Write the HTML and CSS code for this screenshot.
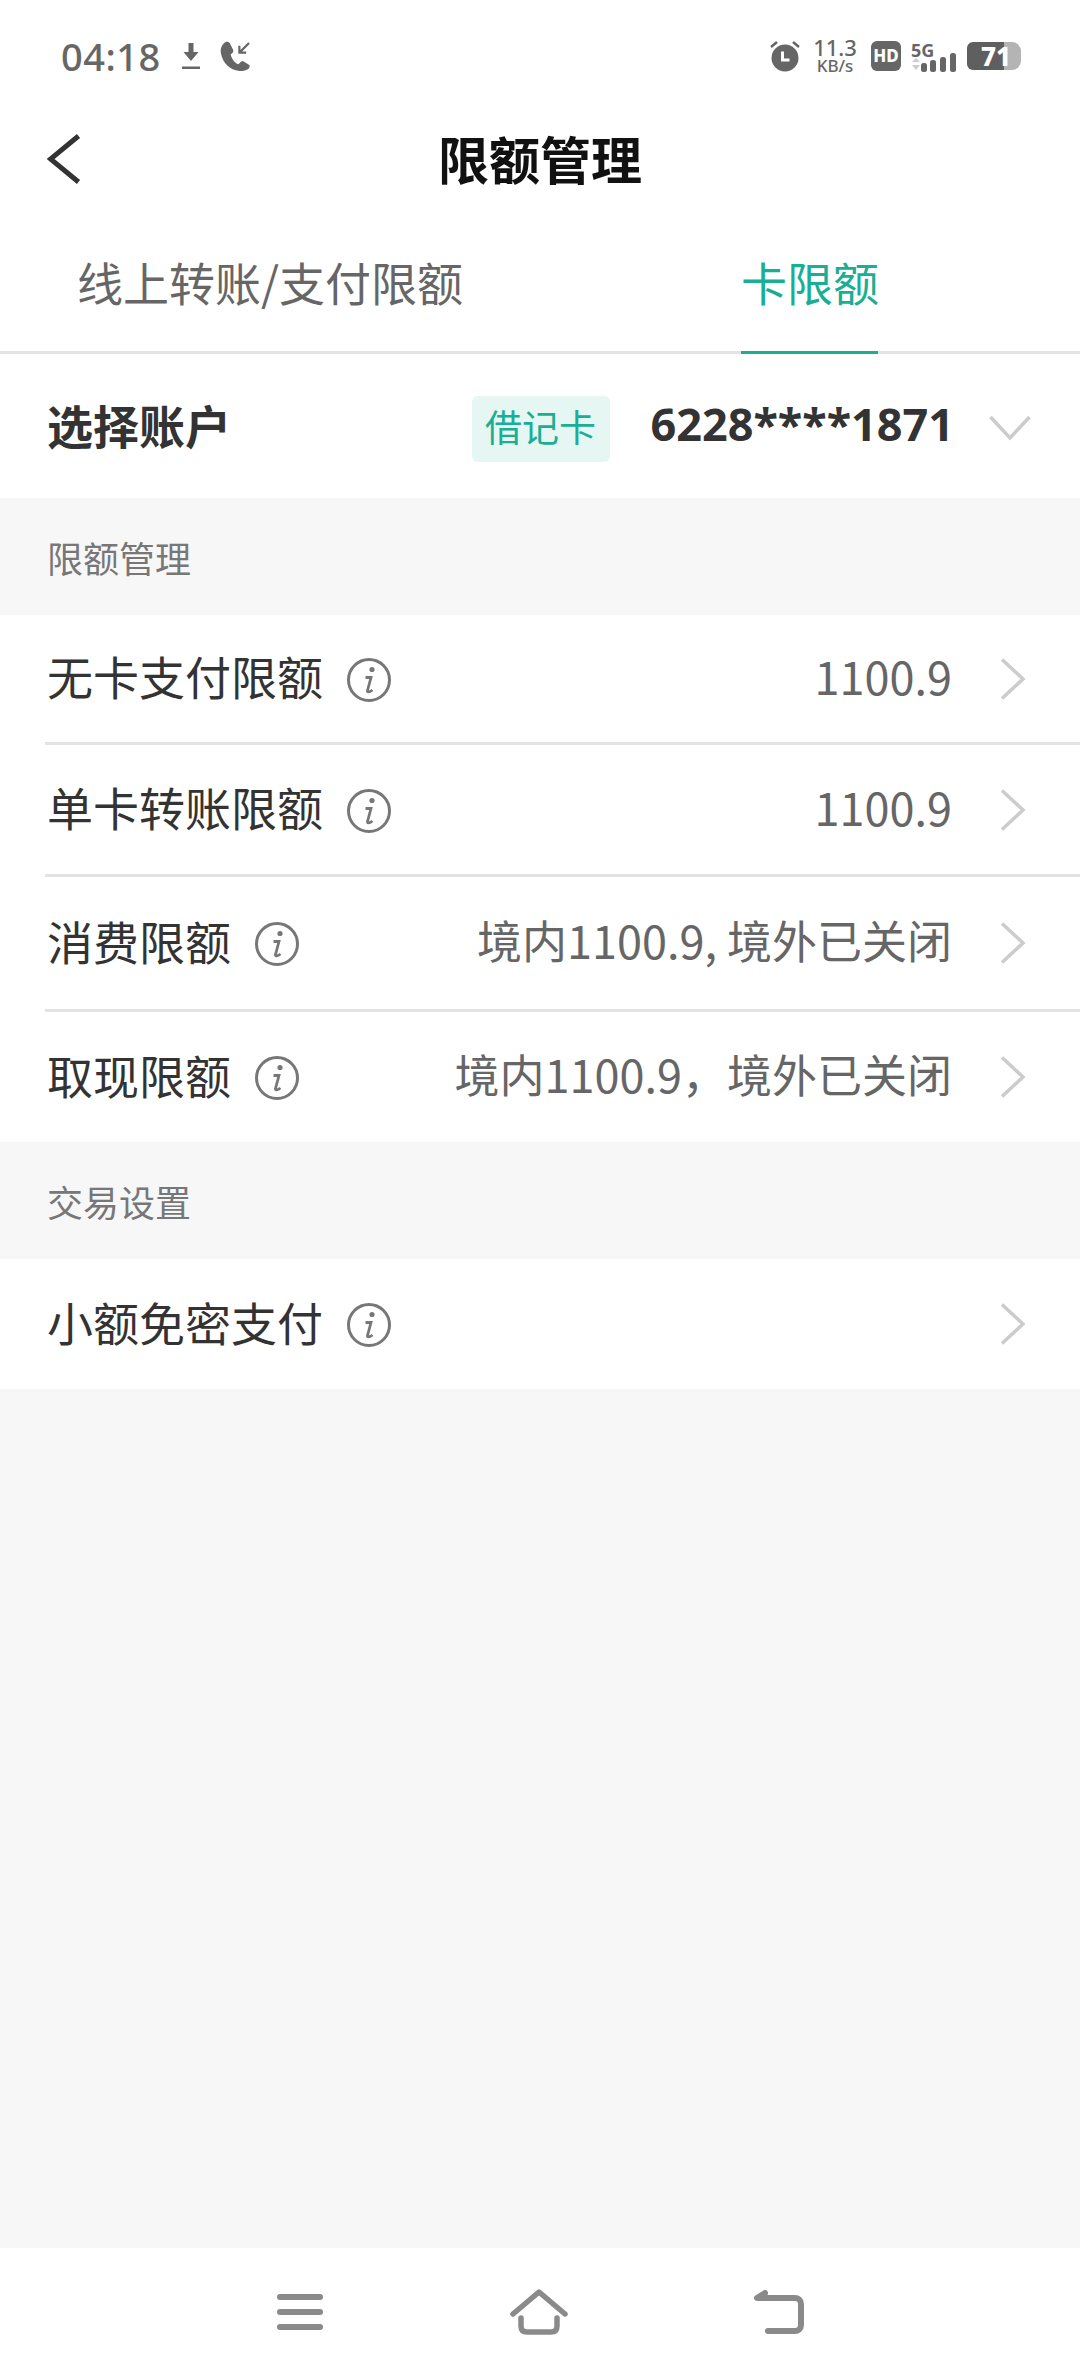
FILE: index.html
```html
<!DOCTYPE html>
<html lang="zh-CN">
<head>
<meta charset="utf-8">
<title>限额管理</title>
<link rel="stylesheet" href="styles.css">
</head>
<body>
<div class="page">
  <div class="status">
    <div class="status-left">
      <span class="time">04:18</span>
      <svg class="i-dl" width="18" height="26" viewBox="0 0 18 26"><path d="M6.500 0h5v9h5l-7.500 9-7.500-9h5z" fill="#666"/><rect y="23.500" width="18" height="2.500" fill="#666"/></svg>
      <svg class="i-ph" width="31" height="31" viewBox="0 0 32 32"><path d="M6 1C2 3 0 8 1 13c2 10 9 17 19 18 4 0 8-1 10-3 1-2 1-3-1-4l-5-3c-1 0-2 0-3 1l-2 2c-4-1-7-6-8-10l2-2c1-1 1-2 0-4L10 2C9 1 7 .500 6 1z" fill="#666"/><path d="M30 2L20 12M20 5v7h7" fill="none" stroke="#666" stroke-width="2.200"/></svg>
    </div>
    <div class="status-right">
      <svg class="i-alarm" width="32" height="32" viewBox="0 0 32 32"><circle cx="16" cy="18" r="13.500" fill="#666"/><path d="M13.500 11.500v8.500h7" fill="none" stroke="#fff" stroke-width="3"/><path d="M2 7l6-5M30 7l-6-5" stroke="#666" stroke-width="2.500"/></svg>
      <div class="speed"><span class="speed-a">11.3</span><span class="speed-b">KB/s</span></div>
      <span class="hd">HD</span>
      <svg class="i-sig" width="46" height="38" viewBox="0 -8 46 38"><path d="M1 17h8l-4-4zM1 20h8l-4 5z" fill="#ccc"/><rect x="10" y="18" width="6" height="9" rx="2.500" fill="#666"/><rect x="19" y="15" width="6" height="12" rx="2.500" fill="#666"/><rect x="29" y="12" width="6" height="15" rx="2.500" fill="#666"/><rect x="39" y="8" width="6" height="19" rx="2.500" fill="#666"/><text x="0" y="12" class="fiveg">5G</text></svg>
      <div class="battery"><span class="bat-num">71</span></div>
    </div>
  </div>

  <header class="title-bar">
    <svg class="back" width="34" height="50" viewBox="0 0 34 50"><path d="M31.500 2L3.500 25l28 23" fill="none" stroke="#333" stroke-width="5"/></svg>
    <h1 class="title">限额管理</h1>
  </header>

  <nav class="tabs">
    <span class="tab">线上转账/支付限额</span>
    <span class="tab tab-on">卡限额</span>
  </nav>

  <section class="account">
    <span class="account-label">选择账户</span>
    <span class="badge">借记卡</span>
    <span class="card-no">6228****1871</span>
    <svg class="down" width="42" height="26" viewBox="0 0 42 26"><path d="M1.500 2L21 23 40.500 2" fill="none" stroke="#ccc" stroke-width="3.500"/></svg>
  </section>

  <div class="section-head sh-1">限额管理</div>
  <section class="list">
    <div class="row r1">
      <span class="row-label">无卡支付限额</span>
      <svg class="info" viewBox="0 0 44 44"><circle cx="22" cy="22" r="20.500" fill="none" stroke="#777" stroke-width="3"/><circle cx="25" cy="11.500" r="2.600" fill="#777"/><path d="M18.500 19.500h5.500l-3.500 13c-.3 1.500 1 2.500 5-.5" fill="none" stroke="#777" stroke-width="2.800"/></svg>
      <span class="row-value">1100.9</span>
      <svg class="chev" viewBox="0 0 26 42"><path d="M2 1.500L23 21 2 40.500" fill="none" stroke="#ccc" stroke-width="3.500"/></svg>
    </div>
    <div class="row r2">
      <span class="row-label">单卡转账限额</span>
      <svg class="info" viewBox="0 0 44 44"><circle cx="22" cy="22" r="20.500" fill="none" stroke="#777" stroke-width="3"/><circle cx="25" cy="11.500" r="2.600" fill="#777"/><path d="M18.500 19.500h5.500l-3.500 13c-.3 1.500 1 2.500 5-.5" fill="none" stroke="#777" stroke-width="2.800"/></svg>
      <span class="row-value">1100.9</span>
      <svg class="chev" viewBox="0 0 26 42"><path d="M2 1.500L23 21 2 40.500" fill="none" stroke="#ccc" stroke-width="3.500"/></svg>
    </div>
    <div class="row r3">
      <span class="row-label">消费限额</span>
      <svg class="info" viewBox="0 0 44 44"><circle cx="22" cy="22" r="20.500" fill="none" stroke="#777" stroke-width="3"/><circle cx="25" cy="11.500" r="2.600" fill="#777"/><path d="M18.500 19.500h5.500l-3.500 13c-.3 1.500 1 2.500 5-.5" fill="none" stroke="#777" stroke-width="2.800"/></svg>
      <span class="row-value">境内1100.9, 境外已关闭</span>
      <svg class="chev" viewBox="0 0 26 42"><path d="M2 1.500L23 21 2 40.500" fill="none" stroke="#ccc" stroke-width="3.500"/></svg>
    </div>
    <div class="row r4 row-last">
      <span class="row-label">取现限额</span>
      <svg class="info" viewBox="0 0 44 44"><circle cx="22" cy="22" r="20.500" fill="none" stroke="#777" stroke-width="3"/><circle cx="25" cy="11.500" r="2.600" fill="#777"/><path d="M18.500 19.500h5.500l-3.500 13c-.3 1.500 1 2.500 5-.5" fill="none" stroke="#777" stroke-width="2.800"/></svg>
      <span class="row-value">境内1100.9，境外已关闭</span>
      <svg class="chev" viewBox="0 0 26 42"><path d="M2 1.500L23 21 2 40.500" fill="none" stroke="#ccc" stroke-width="3.500"/></svg>
    </div>
  </section>

  <div class="section-head sh-2">交易设置</div>
  <section class="list">
    <div class="row r5 row-last">
      <span class="row-label">小额免密支付</span>
      <svg class="info" viewBox="0 0 44 44"><circle cx="22" cy="22" r="20.500" fill="none" stroke="#777" stroke-width="3"/><circle cx="25" cy="11.500" r="2.600" fill="#777"/><path d="M18.500 19.500h5.500l-3.500 13c-.3 1.500 1 2.500 5-.5" fill="none" stroke="#777" stroke-width="2.800"/></svg>
      <span class="row-value"></span>
      <svg class="chev" viewBox="0 0 26 42"><path d="M2 1.500L23 21 2 40.500" fill="none" stroke="#ccc" stroke-width="3.500"/></svg>
    </div>
  </section>

  <div class="filler"></div>

  <footer class="navbar">
    <svg class="nav-ico" width="46" height="36" viewBox="0 0 46 36"><path d="M3 3h40M3 18h40M3 33h40" stroke="#8a8a8a" stroke-width="6" stroke-linecap="round"/></svg>
    <svg class="nav-ico" width="58" height="46" viewBox="0 0 58 46"><path d="M3 25L29 3l26 22" fill="none" stroke="#8a8a8a" stroke-width="5.500" stroke-linecap="round" stroke-linejoin="round"/><path d="M11 29v8c0 4 2 6 6 6h24c4 0 6-2 6-6v-8" fill="none" stroke="#8a8a8a" stroke-width="5.500" stroke-linecap="round"/></svg>
    <svg class="nav-ico" width="50" height="44" viewBox="0 0 50 44"><path d="M11 3L3 8h38c3 0 6 2 6 6v21c0 4-3 6-6 6H14" fill="none" stroke="#8a8a8a" stroke-width="6" stroke-linecap="round" stroke-linejoin="round"/></svg>
  </footer>
</div>
</body>
</html>
```

FILE: styles.css
```css
* { box-sizing: border-box; margin: 0; padding: 0; }
html, body { width: 1080px; height: 2376px; background: #fff; overflow: hidden; }
body { font-family: "Noto Sans CJK SC", "Noto Sans", sans-serif; color: #333; }
.page { width: 1080px; height: 2376px; display: flex; flex-direction: column; background: #f7f7f7; }

.status { height: 112px; background: #fff; display: flex; justify-content: space-between; align-items: center; padding: 0 59px 0 61px; }
.status-left, .status-right { display: flex; align-items: center; }
.time { font-family: "Noto Sans", sans-serif; font-size: 38px; font-weight: 500; color: #666; line-height: 1; letter-spacing: .5px; }
.i-dl { margin-left: 21px; }
.i-ph { margin-left: 20px; }
.i-alarm { margin-left: 0; }
.speed { display: flex; flex-direction: column; gap: 3px; align-items: center; margin-left: 11px; width: 46px; font-family: "Noto Sans", sans-serif; color: #666; font-weight: 500; }
.speed-a { font-size: 22px; line-height: 17px; }
.speed-b { font-size: 17px; line-height: 14px; }
.hd { margin-left: 13px; width: 30px; height: 30px; border-radius: 6px; background: #666; color: #fff; font: 800 17px/30px "Noto Sans", sans-serif; text-align: center; }
.i-sig { margin-left: 10px; }
.fiveg { font: 700 18px "Noto Sans", sans-serif; fill: #666; }
.battery { position: relative; margin-left: 10px; width: 54px; height: 28px; background: linear-gradient(to right, #5f5f5f 37px, #b4b4b4 37px); border-radius: 6px 9px 9px 6px; }
.bat-num { position: absolute; left: 14px; top: -3px; font: 800 26px/34px "Noto Sans", sans-serif; color: #fff; }

.title-bar { position: relative; height: 98px; background: #fff; display: flex; align-items: center; justify-content: center; }
.back { position: absolute; left: 47px; top: 22px; }
.title { font-size: 51px; font-weight: 700; color: #111; line-height: 1; margin-bottom: 6px; }

.tabs { height: 144px; background: #fff; border-bottom: 3px solid #e3e3e3; display: flex; padding-left: 77px; }
.tab { font-size: 46px; color: #666; line-height: 1; padding-top: 48px; height: 144px; }
.tab-on { margin-left: 278px; width: 137px; color: #1aae94; border-bottom: 3px solid #1aae94; white-space: nowrap; }

.account { height: 144px; background: #fff; display: flex; align-items: center; padding: 0 49px 0 47px; }
.account-label { font-size: 46px; font-weight: 700; color: #333; flex: 1; padding-bottom: 5px; }
.badge { width: 138px; height: 66px; margin-top: 5px; background: #e6f6f3; border-radius: 6px; color: #1aae94; font-size: 37px; line-height: 60px; text-align: center; }
.card-no { margin-left: 41px; font-family: "Noto Sans", sans-serif; font-size: 45px; font-weight: 700; color: #333; white-space: nowrap; padding-bottom: 5px; }
.down { margin: 4px 0 0 35px; }

.section-head { height: 117px; font-size: 36px; color: #777; padding: 37px 0 0 47px; line-height: 44px; }
.list { background: #fff; padding-left: 45px; }
.row { display: flex; align-items: center; padding-right: 54px; border-bottom: 3px solid #e3e3e3; }
.r1 { height: 130px; }
.r2 { height: 132px; }
.r3 { height: 135px; }
.r4, .r5 { height: 130px; }
.row-last { border-bottom: 0; }
.row-label { margin-left: 2px; font-size: 46px; color: #333; white-space: nowrap; padding-bottom: 7px; }
.info { margin: 2px 0 0 24px; width: 44px; height: 44px; }
.row-value { flex: 1; text-align: right; font-size: 45px; color: #666; white-space: nowrap; padding-bottom: 7px; }
.chev { margin-left: 48px; width: 26px; height: 42px; }

.filler { flex: 1; }
.navbar { height: 128px; background: #fff; display: flex; align-items: center; padding: 0 276px 0 277px; justify-content: space-between; }
```
